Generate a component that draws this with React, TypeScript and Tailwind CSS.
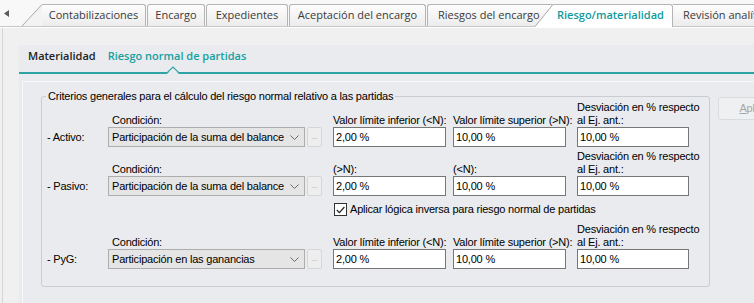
import React from 'react';

const tabs = [
  { label: 'Encargo', w: 'w-[58px]' },
  { label: 'Expedientes', w: 'w-[82px]' },
  { label: 'Aceptación del encargo', w: 'w-[137px]' },
];

const rows = [
  {
    name: '- Activo:',
    cond: 'Participación de la suma del balance',
    low: 'Valor límite inferior (<N):',
    high: 'Valor límite superior (>N):',
  },
  {
    name: '- Pasivo:',
    cond: 'Participación de la suma del balance',
    low: '(>N):',
    high: '(<N):',
  },
  {
    name: '- PyG:',
    cond: 'Participación en las ganancias',
    low: 'Valor límite inferior (<N):',
    high: 'Valor límite superior (>N):',
  },
];

function Combo({ value }: { value: string }) {
  return (
    <div className="flex items-center">
      <div className="flex h-[20px] w-[197px] items-center justify-between border border-[#adadad] bg-[#e5e5e5] pl-[3px] pr-[5px]">
        <span className="whitespace-nowrap">{value}</span>
        <svg width="9" height="5" viewBox="0 0 9 5">
          <path d="M0.5 0.5 L4.5 4.5 L8.5 0.5" fill="none" stroke="#6a6a6a" strokeWidth="1" />
        </svg>
      </div>
      <div className="ml-[2px] flex h-[20px] w-[15px] items-end justify-center rounded-[2px] border border-[#d6d6d6] bg-[#eeeeee] pb-[5px] text-[8px] leading-none text-[#a6a6a6]">
        ...
      </div>
    </div>
  );
}

function Field({ value, w = 'w-[113px]' }: { value: string; w?: string }) {
  return (
    <div className={`flex h-[20px] ${w} items-center border border-[#767676] bg-white pl-[2px] whitespace-nowrap`}>
      {value}
    </div>
  );
}

function CriteriaRow({ row, className = '' }: { row: (typeof rows)[number]; className?: string }) {
  return (
    <div className={`grid grid-cols-[66px_199px_26px_120px_124px_112px] grid-rows-[26px_20px] ${className}`}>
      <div />
      <div className="self-end pl-[4px]">Condición:</div>
      <div />
      <div className="self-end whitespace-nowrap">{row.low}</div>
      <div className="self-end whitespace-nowrap">{row.high}</div>
      <div className="self-end whitespace-nowrap">
        Desviación en % respecto
        <br />
        al Ej. ant.:
      </div>
      <div className="self-center pl-[5px] whitespace-nowrap">{row.name}</div>
      <div className="col-span-2">
        <Combo value={row.cond} />
      </div>
      <Field value="2,00 %" />
      <Field value="10,00 %" />
      <Field value="10,00 %" w="w-[112px]" />
    </div>
  );
}

export default function App() {
  return (
    <div className="relative h-[303px] w-[754px] overflow-hidden bg-[#f0f0f0]">
      {/* main tab strip */}
      <div className="flex h-[27px] items-end border-b border-[#c6c6c6] bg-[#f8f8f8] font-['Open_Sans',sans-serif] text-[11px] text-[#3a3a3a]">
        <div className="flex h-full w-[22px] shrink-0 items-start pl-[4px] pt-[10px]">
          <svg width="5" height="7" viewBox="0 0 5 7">
            <polygon points="5,0 0,3.5 5,7" fill="#5c5c5c" />
          </svg>
        </div>
        <svg width="20" height="22" viewBox="0 0 20 22" className="shrink-0">
          <polygon points="0,22 20,0 20,22" fill="#f3f3f3" />
          <line x1="0" y1="22" x2="20" y2="0.5" stroke="#a8a8a8" strokeWidth="1" />
        </svg>
        <div className="flex h-[22px] w-[104px] shrink-0 items-center justify-center rounded-tr-[3px] border-t border-r border-[#b4b4b4] bg-gradient-to-b from-[#fdfdfd] to-[#ececec]">
          Contabilizaciones
        </div>
        {tabs.map((t) => (
          <div
            key={t.label}
            className={`ml-[1px] flex h-[22px] ${t.w} shrink-0 items-center justify-center rounded-t-[3px] border border-b-0 border-[#b4b4b4] bg-gradient-to-b from-[#fdfdfd] to-[#ececec] whitespace-nowrap`}
          >
            {t.label}
          </div>
        ))}
        <div className="ml-[1px] flex h-[22px] w-[126px] shrink-0 items-center rounded-tl-[3px] border-t border-l border-[#b4b4b4] bg-gradient-to-b from-[#fdfdfd] to-[#ececec] pl-[10px] whitespace-nowrap">
          Riesgos del encargo
        </div>
        <svg width="18" height="23" viewBox="0 0 18 23" className="relative z-10 -mb-px -ml-[18px] shrink-0">
          <polygon points="0,23 18,0 18,23" fill="#ffffff" />
          <line x1="0" y1="22.5" x2="18" y2="0.5" stroke="#a8a8a8" strokeWidth="1" />
        </svg>
        <div className="relative z-10 -mb-px flex h-[23px] w-[120px] shrink-0 items-center rounded-tr-[3px] border-t border-r border-[#b4b4b4] bg-white pb-[1px] pl-[4px] font-semibold whitespace-nowrap text-[#119a9a]">
          Riesgo/materialidad
        </div>
        <div className="flex h-[22px] w-[110px] shrink-0 items-center rounded-tr-[3px] border-t border-r border-[#b4b4b4] bg-gradient-to-b from-[#fdfdfd] to-[#ececec] pl-[10px] whitespace-nowrap">
          Revisión analítica
        </div>
      </div>

      {/* content */}
      <div className="h-[276px] border-t border-white">
        <div className="ml-[2px] h-full border-l border-[#d6d6d6] pl-[16px] pt-[17px]">
          <div className="h-full bg-[#e9ebee]">
            {/* sub tabs */}
            <div className="relative">
              <div className="flex h-[27px] items-center gap-[12px] pb-[4px] pl-[9px] font-['Open_Sans',sans-serif] text-[11px] font-semibold">
                <span className="text-[#222222]">Materialidad</span>
                <span className="text-[#15a0a0]">Riesgo normal de partidas</span>
              </div>
              <div className="h-[2px] bg-[#2ea3a3]" />
              <svg width="12" height="8" viewBox="0 0 12 8" className="absolute left-[148px] top-[21px]">
                <polygon points="0,8 6,1.5 12,8" fill="#e9ebee" />
                <polyline points="0,6.8 6,1 12,6.8" fill="none" stroke="#2ea3a3" strokeWidth="1.2" />
              </svg>
            </div>

            {/* body */}
            <div className="ml-[3px] mt-[7px] h-full border-l border-t border-[#f7f8fa] font-['Liberation_Sans',Arial,sans-serif] text-[11px] leading-[13px] tracking-[-0.2px] text-black">
              <div className="flex items-start">
                <fieldset className="ml-[18px] mt-[9px] w-[669px] shrink-0 rounded-[3px] border border-[#c9cdd1] pb-[17px]">
                  <legend className="ml-[4px] px-[2px] leading-[10px]">
                    Criterios generales para el cálculo del riesgo normal relativo a las partidas
                  </legend>
                  <CriteriaRow row={rows[0]} />
                  <CriteriaRow row={rows[1]} className="mt-[3px]" />
                  <div className="mt-[7px] grid grid-cols-[66px_199px_26px_120px_124px_112px]">
                    <label className="col-span-3 col-start-4 flex h-[13px] items-center gap-[3px] pl-[1px] whitespace-nowrap">
                      <span className="flex h-[13px] w-[13px] items-center justify-center border border-[#333333] bg-white">
                        <svg width="9" height="8" viewBox="0 0 9 8">
                          <path d="M0.8 4 L3.4 6.6 L8.4 1" fill="none" stroke="#222222" strokeWidth="1.2" />
                        </svg>
                      </span>
                      Aplicar lógica inversa para riesgo normal de partidas
                    </label>
                  </div>
                  <CriteriaRow row={rows[2]} className="mt-[7px]" />
                </fieldset>
                <button className="ml-[8px] mt-[15px] h-[23px] w-[75px] shrink-0 rounded-[3px] border border-[#d9dcdf] bg-[#eef0f2] text-[#a7a7a7]">
                  <span className="underline">A</span>plicar
                </button>
              </div>
            </div>
          </div>
        </div>
      </div>
    </div>
  );
}
